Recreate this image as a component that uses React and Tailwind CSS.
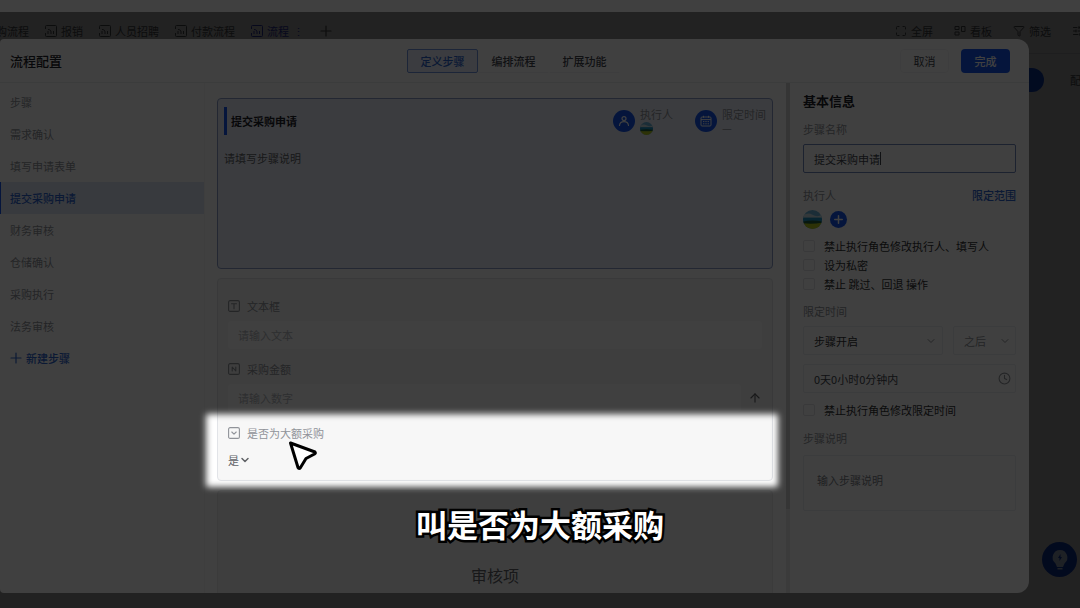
import React, { useState } from 'react';
import { ArrowUp, ChevronDown, Clock, Filter, Maximize, SlidersHorizontal } from 'lucide-react';

const PAGE_TABS = ['报销', '人员招聘', '付款流程'];
const CONFIG_TABS = ['定义步骤', '编排流程', '扩展功能'];
const STEPS = ['需求确认', '填写申请表单', '提交采购申请', '财务审核', '仓储确认', '采购执行', '法务审核'];
const EXECUTOR_OPTIONS = ['禁止执行角色修改执行人、填写人', '设为私密', '禁止 跳过、回退 操作'];

const PlusIcon = ({ className, strokeWidth = 1.2 }) => (
  <svg viewBox="0 0 12 12" className={className} fill="none" stroke="currentColor" strokeWidth={strokeWidth} strokeLinecap="round">
    <path d="M6 1v10M1 6h10" />
  </svg>
);

const FlowIcon = () => (
  <svg viewBox="0 0 12 12" className="w-3 h-3" fill="none" stroke="currentColor">
    <path d="M.5 4V1.500a1 1 0 0 1 1-1h9a1 1 0 0 1 1 1v9a1 1 0 0 1-1 1h-9a1 1 0 0 1-1-1V8" />
    <path d="M3 9V6M3 4.500c2 0 3 1 3 2.500v2M8.500 9V6" />
  </svg>
);

const BoardIcon = () => (
  <svg viewBox="0 0 12 12" className="w-3 h-3" fill="none" stroke="currentColor">
    <path d="M1 1.5h4v3H1zM1 7h4v3H1zM7.5 1.5H11v5H7.5z" />
  </svg>
);

const PersonIcon = () => (
  <svg viewBox="0 0 12 12" className="w-3 h-3" fill="none" stroke="currentColor" strokeWidth="1.2" strokeLinecap="round">
    <circle cx="6" cy="3.6" r="2" />
    <path d="M1.5 10.5c.3-2.4 2-3.8 4.5-3.8s4.200 1.400 4.500 3.800" />
  </svg>
);

const CalendarIcon = () => (
  <svg viewBox="0 0 12 12" className="w-3 h-3" fill="none" stroke="currentColor" strokeWidth="1">
    <rect x="1" y="2" width="10" height="9" rx="1" />
    <path d="M1 4.600h10M3.500.8v2M8.500.8v2M3 6.600h1.400M5.300 6.600h1.400M7.600 6.600H9M3 8.800h1.400M5.300 8.800h1.400M7.600 8.800H9" />
  </svg>
);

const FieldIcon = ({ type }) => (
  <svg viewBox="0 0 12 12" className="w-3 h-3" fill="none" stroke="currentColor" strokeWidth="1.1" strokeLinecap="round" strokeLinejoin="round">
    <rect x=".6" y=".6" width="10.800" height="10.800" rx="1.500" />
    {type === 'text' && <path d="M3.500 3.800h5M6 3.800v5" />}
    {type === 'number' && <path d="M4.200 8V4l3.600 4V4" />}
    {type === 'select' && <path d="M3.800 5 6 7.200 8.200 5" />}
  </svg>
);

const Avatar = ({ className }) => (
  <svg viewBox="0 0 20 20" className={className}>
    <defs>
      <clipPath id="avatar">
        <circle cx="10" cy="10" r="10" />
      </clipPath>
    </defs>
    <g clipPath="url(#avatar)">
      <rect width="20" height="20" fill="#6cb4da" />
      <path d="M0 6Q5 2 10 5t10 0v4H0z" fill="#c9dfe8" />
      <rect y="8" width="20" height="5" fill="#1f8fc0" />
      <path d="M0 12q10-2 20 0v3H0z" fill="#1d5c3c" />
      <path d="M0 14q10 1 20-.500V20H0z" fill="#b4c81e" />
    </g>
  </svg>
);

const Checkbox = ({ label }) => (
  <label className="flex items-center gap-[9px] h-[19px] text-[#303133]">
    <input type="checkbox" className="appearance-none w-3 h-3 rounded-xs border border-[#e2e4e8] bg-white" />
    {label}
  </label>
);

const FieldLabel = ({ type, htmlFor, children }) => (
  <label htmlFor={htmlFor} className="flex items-center gap-[7px] h-4 text-[#909399]">
    <FieldIcon type={type} />
    {children}
  </label>
);

const PageBackground = () => (
  <div className="absolute inset-0 flex flex-col bg-white text-[#606266]">
    <div className="h-3" />
    <div className="flex items-center justify-between h-[42px] pb-1 border-b border-[#e4e6ea]">
      <div className="flex items-center gap-4">
        <span className="-ml-1">购流程</span>
        {PAGE_TABS.map((tab) => (
          <span key={tab} className="flex items-center gap-1">
            <FlowIcon />
            {tab}
          </span>
        ))}
        <span className="flex items-center gap-1 text-[#3a46d8]">
          <FlowIcon />
          流程
          <span>⋮</span>
        </span>
        <PlusIcon className="w-3 h-3" />
      </div>
      <div className="flex items-center gap-[21px] -mr-1">
        <span className="flex items-center gap-1"><Maximize className="w-3 h-3" />全屏</span>
        <span className="flex items-center gap-1"><BoardIcon />看板</span>
        <span className="flex items-center gap-1"><Filter className="w-3 h-3" />筛选</span>
        <SlidersHorizontal className="w-3 h-3" />
      </div>
    </div>
    <div className="flex items-center justify-end gap-[26px] h-[52px] -mr-3">
      <span className="w-12 h-6 rounded-full bg-[#1456f0]" />
      <span>配置</span>
    </div>
  </div>
);

const Header = () => {
  const [active, setActive] = useState('定义步骤');
  return (
    <header className="grid grid-cols-[1fr_auto_1fr] items-center h-11 pl-[10px] pr-3 border-b border-[#ebedf0]">
      <h1 className="text-[13px] font-medium text-[#1f2329]">流程配置</h1>
      <nav className="flex">
        {CONFIG_TABS.map((tab) => (
          <button
            key={tab}
            onClick={() => setActive(tab)}
            className={`w-[71px] h-6 border font-medium ${active === tab
              ? 'rounded-xs border-[#6f94e0] bg-[#e9effd] text-[#2f66d0]'
              : 'border-transparent border-b-[#f3f4f5] text-[#42464e]'
              }`}
          >
            {tab}
          </button>
        ))}
      </nav>
      <div className="flex justify-end gap-3 pr-[7px]">
        <button className="w-[49px] h-6 rounded-sm border border-[#f4f4f5] text-[#42464e]">取消</button>
        <button className="w-[49px] h-6 rounded-sm bg-[#1456f0] text-white font-medium">完成</button>
      </div>
    </header>
  );
};

const Sidebar = () => {
  const [current, setCurrent] = useState('提交采购申请');
  return (
    <aside className="flex flex-col w-[205px] shrink-0 pt-[3px] border-r border-[#f5f6f7] text-[#8f9299]">
      <h2 className="flex items-center h-8 pl-[10px]">步骤</h2>
      {STEPS.map((step) => (
        <button
          key={step}
          onClick={() => setCurrent(step)}
          className={`flex items-center h-8 pl-[9px] border-l ${current === step
            ? 'border-[#1456f0] bg-[#dfe8f8] text-[#2f66d0] font-medium'
            : 'border-transparent'
            }`}
        >
          {step}
        </button>
      ))}
      <button className="flex items-center gap-1 h-8 pl-[10px] text-[#2f66d0] font-medium">
        <PlusIcon className="w-3 h-3" />
        新建步骤
      </button>
    </aside>
  );
};

const StepCard = () => (
  <section className="flex flex-col gap-[15px] h-[171px] shrink-0 px-[6px] py-2 rounded-sm border border-[#8a9cc8] bg-[#ecf0fb]">
    <div className="flex justify-between">
      <div className="flex items-center gap-1 h-7">
        <span className="w-[3px] h-7 bg-[#1456f0]" />
        <h2 className="font-bold text-[#1f2329]">提交采购申请</h2>
      </div>
      <div className="flex gap-[22px] text-[#909399]">
        <div className="flex items-center gap-[5px]">
          <span className="flex items-center justify-center w-[22px] h-[22px] rounded-full bg-[#1456f0] text-white">
            <PersonIcon />
          </span>
          <div className="flex flex-col h-7">
            <span className="leading-[15px]">执行人</span>
            <Avatar className="w-[13px] h-[13px]" />
          </div>
        </div>
        <div className="flex items-center gap-[5px]">
          <span className="flex items-center justify-center w-[22px] h-[22px] rounded-full bg-[#1456f0] text-white">
            <CalendarIcon />
          </span>
          <div className="flex flex-col h-7">
            <span className="leading-[15px]">限定时间</span>
            <span className="leading-[13px]">—</span>
          </div>
        </div>
      </div>
    </div>
    <p className="leading-4 text-[#606266]">请填写步骤说明</p>
  </section>
);

const FormCard = () => (
  <section className="flex flex-col shrink-0 px-[10px] pt-[19px] pb-3 rounded-sm border border-[#e2e4e8] bg-[#f7f7f7]">
    <FieldLabel type="text" htmlFor="text">文本框</FieldLabel>
    <input
      id="text"
      placeholder="请输入文本"
      className="h-7 mt-[7px] px-[10px] rounded-sm bg-white placeholder:text-[#b4b7bd]"
    />
    <div className="mt-3">
      <FieldLabel type="number" htmlFor="amount">采购金额</FieldLabel>
    </div>
    <div className="flex items-center mt-[7px]">
      <input
        id="amount"
        placeholder="请输入数字"
        className="flex-1 h-7 px-[10px] rounded-sm bg-white placeholder:text-[#b4b7bd]"
      />
      <button aria-label="展开" className="flex justify-end w-[21px] text-[#606266]">
        <ArrowUp className="w-[14px] h-[14px]" />
      </button>
    </div>
    <div className="mt-[13px]">
      <FieldLabel type="select" htmlFor="large">是否为大额采购</FieldLabel>
    </div>
    <div className="relative flex items-center w-6 mt-[11px] text-[#606266]">
      <select id="large" className="appearance-none w-6 h-4 bg-transparent">
        <option>是</option>
        <option>否</option>
      </select>
      <ChevronDown className="absolute left-[11px] w-3 h-3 pointer-events-none" strokeWidth={3} />
    </div>
  </section>
);

const StepEditor = () => (
  <main className="flex flex-1 min-w-0">
    <div className="flex flex-col flex-1 gap-[9px] pl-3 pr-[13px] pt-[15px] overflow-hidden">
      <StepCard />
      <FormCard />
      <section className="flex justify-center shrink-0 h-[180px] pt-[72px] rounded-sm border border-[#e9eaec] bg-[#f7f7f7]">
        <h2 className="text-base leading-6 text-[#606266]">审核项</h2>
      </section>
    </div>
    <div className="w-1 bg-[#ececec]">
      <div className="w-1 h-[426px] bg-[#d4d4d4]" />
    </div>
  </main>
);

const InfoPanel = () => (
  <aside className="flex flex-col w-[239px] shrink-0 pt-2 pl-[13px] pr-[13px] text-[#909399]">
    <h2 className="text-[13px] leading-5 font-bold text-[#1f2329]">基本信息</h2>
    <label htmlFor="stepName" className="mt-[10px] leading-4">步骤名称</label>
    <div className="relative flex mt-[7px]">
      <input
        id="stepName"
        defaultValue="提交采购申请"
        className="w-full h-[29px] px-[10px] rounded-xs border border-[#6f86bd] text-[#42464e]"
      />
      <span className="absolute left-[77px] top-2 w-px h-[13px] bg-[#42464e]" />
    </div>
    <div className="flex justify-between mt-[14px] leading-4">
      <span>执行人</span>
      <a href="#scope" className="text-[#2f66d0] font-medium">限定范围</a>
    </div>
    <div className="flex items-center gap-2 my-[7px]">
      <Avatar className="w-[19px] h-[19px]" />
      <button aria-label="添加执行人" className="flex items-center justify-center w-[17px] h-[17px] rounded-full bg-[#1456f0] text-white">
        <PlusIcon className="w-[9px] h-[9px]" strokeWidth={2} />
      </button>
    </div>
    {EXECUTOR_OPTIONS.map((option) => (
      <Checkbox key={option} label={option} />
    ))}
    <h3 className="mt-[10px] leading-4">限定时间</h3>
    <div className="flex gap-[10px] mt-[7px]">
      <div className="relative flex items-center flex-1">
        <select aria-label="开始时机" className="appearance-none w-full h-[29px] px-[10px] rounded-xs border border-[#eceef1] text-[#303133]">
          <option>步骤开启</option>
        </select>
        <ChevronDown className="absolute right-[6px] w-3 h-3 pointer-events-none" />
      </div>
      <div className="relative flex items-center w-[63px]">
        <select aria-label="先后" className="appearance-none w-full h-[29px] px-[10px] rounded-xs border border-[#eceef1]">
          <option>之后</option>
        </select>
        <ChevronDown className="absolute right-[5px] w-3 h-3 pointer-events-none" />
      </div>
    </div>
    <div className="relative flex items-center mt-[9px] mb-[7px]">
      <input
        aria-label="时长"
        defaultValue="0天0小时0分钟内"
        className="w-full h-[29px] px-[10px] rounded-xs border border-[#eceef1] text-[#42464e]"
      />
      <Clock className="absolute right-[5px] w-[13px] h-[13px]" />
    </div>
    <Checkbox label="禁止执行角色修改限定时间" />
    <label htmlFor="desc" className="mt-[11px] leading-4">步骤说明</label>
    <textarea
      id="desc"
      placeholder="输入步骤说明"
      className="h-14 mt-[9px] px-[13px] py-4 leading-4 resize-none rounded-xs border border-[#eceef1] placeholder:text-[#7d8087]"
    />
  </aside>
);

const App = () => {
  return (
    <div className="relative h-screen overflow-hidden text-[11px] leading-4 font-['Noto_Sans_CJK_SC',sans-serif]">
      <PageBackground />

      <div className="absolute inset-x-0 top-3 bottom-0 pt-[27px] pb-[15px] pr-[51px] bg-black/47">
        <div className="flex flex-col h-full rounded-xl rounded-l-sm overflow-hidden bg-white">
          <Header />
          <div className="flex flex-1 min-h-0">
            <Sidebar />
            <StepEditor />
            <InfoPanel />
          </div>
        </div>
      </div>

      <button aria-label="帮助" className="absolute right-[3px] bottom-[31px] flex items-center justify-center w-[35px] h-[35px] rounded-full bg-[#0b2a78] text-[#7a8293]">
        <svg viewBox="0 0 18 22" className="w-[18px] h-[22px]">
          <path d="M9 1a7.500 7.500 0 0 1 4.500 13.400L12 18H6l-1.500-3.600A7.500 7.500 0 0 1 9 1zM6.500 19h5v1.500h-5z" fill="currentColor" />
          <path d="M9.500 5v3h1.500L8.500 12V9H7z" fill="#0b2a78" />
        </svg>
      </button>

      {/* outline dims everything around the highlighted field */}
      <div className="absolute left-[206px] top-[414px] w-[572px] h-[73px] rounded-xs outline-[1200px] outline-black/75 blur-[3px] pointer-events-none" />

      <svg viewBox="0 0 32 34" className="absolute left-[286px] top-[438px] w-8 h-[34px]">
        <path
          d="M4.500 5 29 14 Q30 15.500 28.500 16 L20 20.500 L14.500 29.500 Q13 31.500 12 29.500 Z"
          fill="#fff"
          stroke="#000"
          strokeWidth="3"
          strokeLinejoin="round"
        />
      </svg>

      <p className="absolute inset-x-0 top-[502px] text-center text-[31px] leading-[44px] font-bold text-white [-webkit-text-stroke:5px_#000] [paint-order:stroke_fill]">
        叫是否为大额采购
      </p>
    </div>
  );
};

export default App;
